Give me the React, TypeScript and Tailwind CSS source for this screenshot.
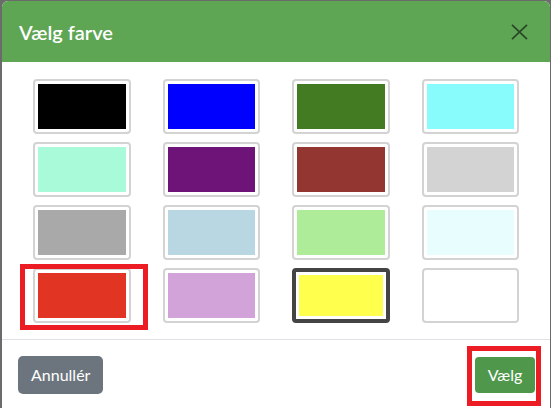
const swatches = [
  "#000000", "#0000ff", "#437b22", "#88fbfc",
  "#a9fad9", "#6e1479", "#933531", "#d3d3d3",
  "#a9a9a9", "#b9d6e3", "#aeec99", "#e8fdfe",
  "#e13423", "#d1a3d8", "#ffff4d", "#ffffff",
];

const SELECTED = 14;
const MARKED = 12;

function Swatch({ color, index }: { color: string; index: number }) {
  const selected = index === SELECTED;
  return (
    <div className="relative">
      <div
        className={`h-[55px] rounded-[4px] bg-white ${
          selected ? "border-4 border-[#444444] p-[3px]" : "border-2 border-[#d3d3d3] p-[3px]"
        }`}
      >
        <div className="h-full w-full" style={{ backgroundColor: color }} />
      </div>
      {index === MARKED && (
        <div className="pointer-events-none absolute -left-[13px] -top-[4px] h-[66px] w-[128px] border-[5px] border-[#ec1c24]" />
      )}
    </div>
  );
}

export default function App() {
  return (
    <div
      className="h-[408px] w-[551px] overflow-hidden bg-[#6b6b6b] pl-[2px] pt-[1px]"
      style={{ fontFamily: "Lato, 'Open Sans', sans-serif" }}
    >
      <div className="w-[548px] rounded-t-[6px] bg-white">
        {/* Header */}
        <div className="flex h-[61px] items-center justify-between rounded-t-[6px] bg-[#5ea554] pl-[17px] pr-[22px]">
          <h2 className="text-[20px] font-semibold leading-[30px] text-white">Vælg farve</h2>
          <button className="flex h-[18px] w-[18px] items-center justify-center" aria-label="Luk">
            <svg width="17" height="16" viewBox="0 0 17 16" fill="none">
              <path d="M1 0.8 L16 15.2 M16 0.8 L1 15.2" stroke="#2b4628" strokeWidth="1.7" />
            </svg>
          </button>
        </div>

        {/* Body */}
        <div className="grid grid-cols-4 gap-x-[32px] gap-y-[8px] px-[31px] pb-[16px] pt-[17px]">
          {swatches.map((c, i) => (
            <Swatch key={i} color={c} index={i} />
          ))}
        </div>

        {/* Footer */}
        <div className="flex h-[80px] items-start justify-between border-t border-[#dee2e6] pl-[16px] pr-[15px] pt-[16px]">
          <button className="h-[38px] rounded-[5px] bg-[#6c757d] px-[13px] text-[16px] text-white">
            Annullér
          </button>
          <div className="relative mt-[1px]">
            <button className="h-[36px] w-[60px] rounded-[4px] bg-[#4f974b] text-[16px] text-white">
              Vælg
            </button>
            <div className="pointer-events-none absolute -left-[8px] -top-[11px] h-[60px] w-[74px] border-[5px] border-[#ec1c24]" />
          </div>
        </div>
      </div>
    </div>
  );
}
